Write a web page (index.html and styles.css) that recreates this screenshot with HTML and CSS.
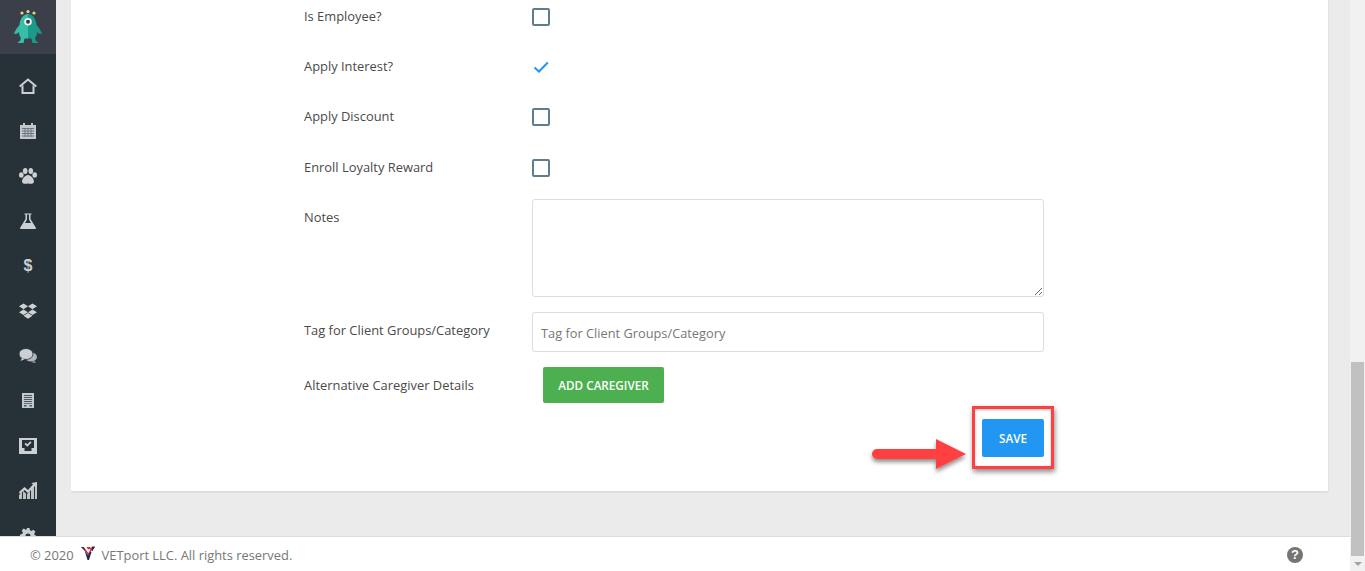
FILE: index.html
```html
<!DOCTYPE html>
<html lang="en">
<head>
<meta charset="utf-8">
<title>Client form</title>
<link rel="stylesheet" href="styles.css">
</head>
<body>
<div class="app">
  <aside class="sidebar">
    <div class="brand">
      <svg class="monster" viewBox="0 0 28 33" width="28" height="33">
        <circle cx="8" cy="3" r="1.600" fill="#e4d77c"/><circle cx="14" cy="1.600" r="1.600" fill="#e4d77c"/><circle cx="20" cy="3" r="1.600" fill="#e4d77c"/>
        <path d="M14 4c5 0 8 5 8.500 11 1.500 2 4.500 5 5.500 9l-3.500-.5-1.500-1.500c0 3-1 5-2 6l1 3 2 1v1h-5.500l-1-4.500H14z" fill="#1b9a8a"/>
        <path d="M14 4c-5 0-8 5-8.500 11-1.500 2-4.500 5-5.500 9l3.500-.5 1.500-1.500c0 3 1 5 2 6l-1 3-2 1v1h5.500l1-4.500H14z" fill="#35bfa9"/>
        <circle cx="14" cy="11.700" r="3.800" fill="#f2f2f2"/><circle cx="14" cy="11.700" r="2" fill="#2b3a44"/>
      </svg>
    </div>
    <nav class="nav">
      <a class="nav-item"><svg viewBox="0 0 18 16" width="18" height="16"><path d="M.7 8.500L9 1.500l8.300 7" fill="none" stroke="#cdd0d2" stroke-width="2"/><path d="M3.500 7.500v7.500h11V7.500" fill="none" stroke="#cdd0d2" stroke-width="2"/></svg></a>
      <a class="nav-item"><svg viewBox="0 0 16 16" width="16" height="16"><path d="M0 2h16v14H0z" fill="#c4c8ca"/><path d="M3 0h2v3H3zM11 0h2v3h-2z" fill="#c4c8ca"/><path d="M2 5h12v1H2zM2 7.500h12v1H2zM2 10h12v1H2zM2 12.500h12v1H2zM4.500 5h1v9h-1zM7.500 5h1v9h-1zM10.500 5h1v9h-1z" fill="#6d767c"/></svg></a>
      <a class="nav-item"><svg viewBox="0 0 18 16" width="18" height="16" fill="#cdd0d2"><ellipse cx="2.300" cy="7" rx="2.300" ry="2.800"/><ellipse cx="6.200" cy="3" rx="2.300" ry="3"/><ellipse cx="11.800" cy="3" rx="2.300" ry="3"/><ellipse cx="15.700" cy="7" rx="2.300" ry="2.800"/><path d="M9 7c-3 0-6 4-6 6.500S6 16 9 15.500c3 .5 6 .5 6-2S12 7 9 7z"/></svg></a>
      <a class="nav-item"><svg viewBox="0 0 16 16" width="16" height="16"><path d="M4.500 .5h7v1h-1v4.500L16 15c0 .5-.3 1-1 1H1c-.7 0-1-.5-1-1l5.500-9V1.500h-1zM7 1.500V6.500L5 10h6L9 6.500v-5z" fill="#cdd0d2"/></svg></a>
      <a class="nav-item nav-dollar">$</a>
      <a class="nav-item"><svg viewBox="0 0 18 16" width="18" height="16" fill="#cdd0d2"><path d="M4.500 .5L9 3.300 4.500 6.200 0 3.300zM13.500 .5L18 3.300l-4.500 2.900L9 3.300zM4.500 6.400L9 9.200 4.500 12 0 9.200zM13.500 6.400L18 9.200 13.500 12 9 9.200zM4.500 12.800L9 10l4.500 2.800L9 15.700z"/></svg></a>
      <a class="nav-item"><svg viewBox="0 0 18 15" width="18" height="15"><ellipse cx="12" cy="9" rx="6" ry="4.500" fill="#b0b5b8"/><path d="M15 13l2 2-4-.8z" fill="#b0b5b8"/><ellipse cx="7" cy="6" rx="7" ry="5.500" fill="#cdd0d2" stroke="#263238" stroke-width=".8"/><path d="M3 10l-1.500 3 4-1.800z" fill="#cdd0d2"/></svg></a>
      <a class="nav-item"><svg viewBox="0 0 12 15" width="12" height="15"><path d="M0 0h12v15H0z" fill="#c4c8ca"/><path d="M2 2h8v1H2zM2 4h8v1H2zM2 6h8v1H2zM2 8h8v1H2zM2 10h8v.8H2zM2 12h2.500v1.500H2zM7.500 12H10v1.500H7.500z" fill="#4b565d"/></svg></a>
      <a class="nav-item"><svg viewBox="0 0 18 16" width="18" height="16"><path d="M0 0h18v16H0z" fill="#cdd0d2"/><path d="M3 2h12v8h-2.500v3h-7v-3H3z" fill="#263238"/><path d="M5.500 6l1.300-1.200 1.500 1.500 3-3L12.500 4.500 8.300 8.700z" fill="#cdd0d2"/></svg></a>
      <a class="nav-item"><svg viewBox="0 0 18 17" width="18" height="17" fill="#cdd0d2"><path d="M0 17v-4l3-3v7zM4 17V9l3 2.500V17zM8 17v-5l3-3v8zM12 17V7l3-3v13zM16 17V2l2-2v17z" opacity=".9"/><path d="M0 10l5.500-5L9 8l5-5.500L12.500 1 18 0v5.500L16 4l-7 7-3.500-3L1 12z"/></svg></a>
      <a class="nav-item"><svg viewBox="0 0 16 16" width="16" height="16"><path d="M6.500 0h3l.4 2.200 1.500.7 2-1.200 2 2-1.200 2 .7 1.500 2.100.4v3l-2.200.4-.7 1.500 1.200 2-2 2-2-1.200-1.500.7L9.500 16h-3l-.4-2.200-1.500-.7-2 1.200-2-2 1.200-2-.7-1.500L0 9.500v-3l2.200-.4.7-1.500-1.200-2 2-2 2 1.200 1.500-.7z" fill="#cdd0d2"/><circle cx="8" cy="8" r="2.500" fill="#263238"/></svg></a>
    </nav>
  </aside>

  <main class="main">
    <section class="card">
      <form class="form">
        <div class="row row-check"><span class="label">Is Employee?</span><span class="box"></span></div>
        <div class="row row-check"><span class="label">Apply Interest?</span><span class="tick"><svg viewBox="0 0 16 12" width="16" height="12"><path d="M1.500 6.500l4.500 4L14.800 1.500" fill="none" stroke="#2196f3" stroke-width="2"/></svg></span></div>
        <div class="row row-check"><span class="label">Apply Discount</span><span class="box"></span></div>
        <div class="row row-check row-last"><span class="label">Enroll Loyalty Reward</span><span class="box"></span></div>
        <div class="row row-notes"><span class="label">Notes</span><textarea class="textarea"></textarea></div>
        <div class="row row-tag"><span class="label">Tag for Client Groups/Category</span><input class="input" type="text" placeholder="Tag for Client Groups/Category"></div>
        <div class="row row-btn"><span class="label">Alternative Caregiver Details</span><button class="btn btn-green" type="button">ADD CAREGIVER</button></div>
        <div class="actions"><button class="btn btn-blue" type="button">SAVE</button></div>
      </form>
    </section>
  </main>

  <footer class="footer">
    <span class="copy">© 2020</span>
    <svg class="vlogo" viewBox="0 0 14 14" width="14" height="14"><path d="M3.500 4L7 9l2-4 1.500 1L8 14H6.500z" fill="#1f2a5c"/><path d="M0 1l3 .5L7.500 7 9.500 3 7 3.500 5.500 1H9l1 1 1-1.500 3-.5-3.500 5L9 5 7.500 9z" fill="#d3333c"/><path d="M0 1h2.500L5 5.500zM11 1h3l-3 4.500z" fill="#1f2a5c"/></svg>
    <span class="copy">VETport LLC. All rights reserved.</span>
    <span class="help">?</span>
  </footer>

  <div class="scrollbar">
    <span class="arrow arrow-up"></span>
    <span class="track"><span class="thumb"></span></span>
    <span class="arrow arrow-down"></span>
  </div>

  <div class="callout"></div>
  <svg class="pointer" viewBox="0 0 110 50" width="110" height="50">
    <defs><filter id="sh" x="-20%" y="-40%" width="140%" height="200%"><feDropShadow dx="0" dy="3" stdDeviation="2" flood-color="#000" flood-opacity=".45"/></filter></defs>
    <path d="M11 10h59V0l30 15-30 15V20H11a5 5 0 0 1 0-10z" fill="#ff4040" filter="url(#sh)" transform="translate(0 5)"/>
  </svg>
</div>
</body>
</html>
```
FILE: styles.css
```css
* { box-sizing: border-box; }
html, body { margin: 0; height: 100%; overflow: hidden; }
body { font-family: "Open Sans", "Noto Sans", sans-serif; font-size: 12.9px; color: #4a4a4a; background: #ebebeb; }

.app {
  position: relative;
  display: grid;
  grid-template-columns: 56px 1fr 15px;
  grid-template-rows: 536px 35px;
  width: 1365px;
  height: 571px;
  overflow: hidden;
}

.sidebar { grid-column: 1; grid-row: 1; background: #263238; overflow: hidden; }
.brand { height: 54px; background: #3b3f4a; display: flex; justify-content: center; padding-top: 10px; }
.nav { display: flex; flex-direction: column; padding-top: 9px; }
.nav-item { height: 45px; flex: none; display: flex; align-items: center; justify-content: center; }
.nav-dollar { color: #cdd0d2; font: 700 16px "Liberation Sans", sans-serif; }

.main { grid-column: 2; grid-row: 1; padding: 0 21px 0 15px; overflow: hidden; }
.card { height: 493px; background: #fff; border-bottom: 2px solid #dedede; border-right: 1px solid #e2e2e2; border-radius: 0 0 3px 3px; padding: 1px 0 0 233px; }
.form { display: flex; flex-direction: column; width: 740px; }

.row { display: flex; align-items: center; height: 32px; margin-bottom: 18px; }
.row-check .label { padding-bottom: 2px; }
.row-last { margin-top: 1px; margin-bottom: 15px; }
.row-notes { align-items: flex-start; height: 98px; margin-bottom: 15px; }
.row-notes .label { padding-top: 9px; }
.row-tag { height: 40px; margin-bottom: 15px; align-items: flex-start; }
.row-tag .label { padding-top: 9px; }
.row-btn { height: 36px; margin-bottom: 16px; }
.label { width: 228px; flex: none; }

.box { width: 18px; height: 18px; border: 2px solid #607d8b; border-radius: 2px; }
.tick { width: 18px; height: 18px; display: flex; align-items: center; justify-content: center; }

.textarea, .input { width: 512px; border: 1px solid #ddd; border-radius: 3px; font: inherit; color: #444; background: #fff; }
.textarea { height: 98px; resize: both; display: block; }
.input { height: 40px; padding: 1px 8px 0; font-size: 12.8px; }
.input::placeholder { color: #777; opacity: 1; }

.btn { border: 0; border-radius: 2px; color: #fff; font: 600 11.7px "Open Sans", sans-serif; padding: 0 0 1px; }
.btn-green { width: 121px; height: 36px; margin-left: 11px; background: #4caf50; }
.btn-blue { width: 62px; height: 38px; background: #2196f3; }
.actions { width: 740px; display: flex; justify-content: flex-end; }

.footer { grid-column: 1 / 3; grid-row: 2; background: #fff; border-top: 1px solid #ddd; display: flex; align-items: center; padding: 2px 47px 0 30px; color: #777; z-index: 1; }
.vlogo { margin: 0 7px 5px 7px; }
.help { margin-left: auto; width: 16px; height: 16px; border-radius: 50%; background: #757575; color: #fff; font: 700 13px/16px "Liberation Sans", sans-serif; text-align: center; }

.scrollbar { grid-column: 3; grid-row: 1 / 3; background: #f1f1f1; display: flex; flex-direction: column; z-index: 1; }
.arrow { height: 15px; flex: none; display: flex; justify-content: center; align-items: center; }
.arrow-down::before { content: ""; border: 4px solid transparent; border-top: 4px solid #a3a3a3; border-bottom: 0; }
.track { flex: 1; display: flex; flex-direction: column; justify-content: flex-end; padding: 0 1px; }
.thumb { height: 194px; background: #c1c1c1; }

.callout { position: absolute; left: 972px; top: 406px; width: 82px; height: 63px; border: 3px solid #ff4040; box-shadow: 1px 3px 5px rgba(0,0,0,.45), inset 0 1px 3px rgba(0,0,0,.25); z-index: 2; }
.pointer { position: absolute; left: 866px; top: 434px; z-index: 2; }
```
